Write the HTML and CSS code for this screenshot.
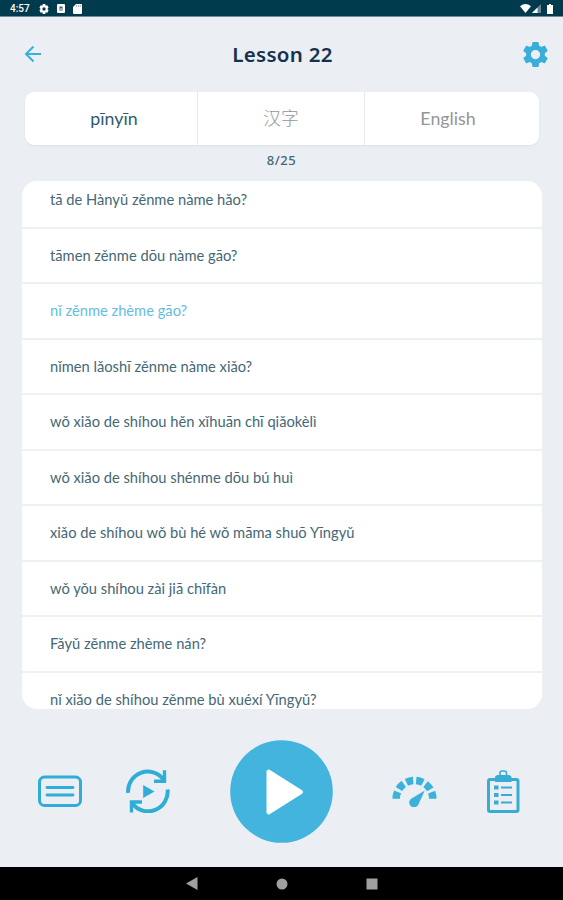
FILE: index.html
```html
<!DOCTYPE html>
<html lang="en">
<head>
<meta charset="UTF-8">
<meta name="viewport" content="width=device-width, initial-scale=1.0">
<title>Lesson 22</title>
<link rel="stylesheet" href="styles.css">
</head>

<body>
<div class="status-bar">
    <span class="clock">4:57</span>
    <svg class="st-gear" width="10" height="10" viewBox="0 0 24 24"><path fill="#fff" fill-rule="evenodd" d="M9 0h6l1 4 4-1 3 6-3 3 3 3-3 6-4-1-1 4H9l-1-4-4 1-3-6 3-3-3-3 3-6 4 1zM12 8a4 4 0 1 0 0 8 4 4 0 0 0 0-8z"/></svg>
    <svg class="st-app" width="8" height="9" viewBox="0 0 8 9"><rect width="8" height="9" rx="1" fill="#fff"/><rect x="2.5" y="2.5" width="3" height="4" fill="#3d5d6b"/><path d="M3 5h2" stroke="#fff"/></svg>
    <svg class="st-card" width="9" height="10" viewBox="0 0 9 10"><path fill="#fff" d="M3 0h5q1 0 1 1v8q0 1-1 1H1q-1 0-1-1V3z"/><path stroke="#8fa3b0" stroke-width=".8" d="M3.500 1v2M5.500 1v2M7.300 1v2"/></svg>
    <div class="status-right">
        <svg width="11" height="9" viewBox="0 0 11 9"><path fill="#fff" d="M0 2.200Q5.500-2 11 2.200L5.500 9z"/></svg>
        <svg width="9" height="9" viewBox="0 0 9 9"><path fill="#6c8592" d="M9 0v9H0z"/><path fill="#fff" d="M5.500 3.500V9H0z"/></svg>
        <svg class="battery" width="6" height="10" viewBox="0 0 6 10"><path fill="#fff" d="M2 0h2v1h2v9H0V1h2z"/></svg>
    </div>
</div>

<div class="header">
    <svg class="back" width="18" height="18" viewBox="0 0 18 18"><path fill="none" stroke="#36b1d8" stroke-width="2" d="M17 9H2M9.500 1.500L2 9l7.500 7.500"/></svg>
    <h1 class="title">Lesson 22</h1>
    <svg class="settings" width="25" height="25" viewBox="2 2 20 20"><path fill="#3aaedb" d="M19.430 12.980c.040-.320.070-.640.070-.980s-.030-.660-.070-.980l2.110-1.650c.190-.150.240-.420.120-.640l-2-3.460c-.120-.220-.390-.300-.610-.220l-2.490 1c-.520-.400-1.080-.730-1.690-.980l-.380-2.650C14.460 2.180 14.250 2 14 2h-4c-.250 0-.460.180-.490.420l-.380 2.650c-.610.250-1.170.590-1.690.980l-2.490-1c-.230-.090-.490 0-.610.220l-2 3.460c-.130.220-.070.490.120.640l2.110 1.650c-.040.320-.070.650-.070.980s.030.660.070.980l-2.110 1.650c-.190.150-.240.420-.120.640l2 3.460c.120.220.390.300.610.220l2.490-1c.520.400 1.080.730 1.690.980l.380 2.650c.030.240.240.420.490.420h4c.250 0 .460-.180.490-.420l.380-2.650c.610-.250 1.170-.590 1.690-.980l2.490 1c.230.090.490 0 .610-.220l2-3.460c.120-.220.070-.490-.120-.640l-2.110-1.650zM12 15.700c-2 0-3.700-1.700-3.700-3.700s1.700-3.700 3.700-3.700 3.700 1.700 3.700 3.700-1.700 3.700-3.700 3.700z"/></svg>
</div>

<div class="tabs">
    <div class="tab active">pīnyīn</div>
    <div class="tab hanzi">汉字</div>
    <div class="tab english">English</div>
</div>

<p class="counter">8/25</p>

<div class="list">
    <div class="row first">tā de Hànyǔ zěnme nàme hǎo?</div>
    <div class="row">tāmen zěnme dōu nàme gāo?</div>
    <div class="row current">nǐ zěnme zhème gāo?</div>
    <div class="row">nǐmen lǎoshī zěnme nàme xiǎo?</div>
    <div class="row">wǒ xiǎo de shíhou hěn xǐhuān chī qiǎokèlì</div>
    <div class="row">wǒ xiǎo de shíhou shénme dōu bú huì</div>
    <div class="row">xiǎo de shíhou wǒ bù hé wǒ māma shuō Yīngyǔ</div>
    <div class="row">wǒ yǒu shíhou zài jiā chīfàn</div>
    <div class="row">Fǎyǔ zěnme zhème nán?</div>
    <div class="row">nǐ xiǎo de shíhou zěnme bù xuéxí Yīngyǔ?</div>
</div>

<div class="controls">
    <div class="group-left">
        <svg width="44" height="32" viewBox="0 0 44 32"><rect x="1.500" y="2" width="41" height="28.500" rx="5" fill="none" stroke="#30add6" stroke-width="3"/><path stroke="#30add6" stroke-width="2.800" stroke-linecap="round" d="M9 12.500h26M9 20h26"/></svg>
        <svg width="44" height="44" viewBox="0 0 44 44">
            <path fill="none" stroke="#30add6" stroke-width="4" d="M2.100 23.800A19.700 19.700 0 0 1 37.500 10.500M41.600 20.500A19.700 19.700 0 0 1 6.300 34.500"/>
            <path fill="none" stroke="#30add6" stroke-width="3.400" d="M38.500 1.300v10.900H28M5.500 43.500V33H16"/>
            <path fill="#30add6" d="M17.200 16v13L28.500 22.500z"/>
        </svg>
    </div>
    <svg width="103" height="103" viewBox="0 0 103 103"><circle cx="51.500" cy="51.500" r="51.300" fill="#42b4dd"/><path fill="#fff" stroke="#fff" stroke-width="4" stroke-linejoin="round" d="M38.500 31.500v41L71 52z"/></svg>
    <div class="group-right">
        <svg width="45" height="32" viewBox="0 0 45 32">
            <path fill="none" stroke="#3cb1da" stroke-width="7.500" stroke-dasharray="7 3.100" d="M4.200 23.700A18.300 18.300 0 0 1 40.800 23.700"/>
            <path fill="#3cb1da" d="M32.800 15.500L18.800 24A4.800 4.800 0 1 0 26.500 29.300z"/>
        </svg>
        <svg width="33" height="44" viewBox="0 0 33 44">
            <rect x="1.500" y="10.500" width="29.500" height="32" rx="1.500" fill="none" stroke="#38acd4" stroke-width="3"/>
            <path fill="#38acd4" d="M8 13V8.500q0-2 3-2.500h10.500q3 .500 3 2.500V13z"/>
            <path fill="none" stroke="#38acd4" stroke-width="1.600" d="M13 7.500V4q0-2 2-2h2.500q2 0 2 2v3.500"/>
            <path stroke="#38acd4" stroke-width="2.200" d="M14 18.500h11M14 26h11M14 33.500h11"/>
            <path stroke="#38acd4" stroke-width="4.200" d="M7 18.500h4.500M7 26h4.500M7 33.500h4.500"/>
        </svg>
    </div>
</div>

<div class="nav-bar">
    <svg width="12" height="13" viewBox="0 0 12 13"><path fill="#a0a0a0" d="M11.500 0v13L0 6.500z"/></svg>
    <svg width="12" height="12" viewBox="0 0 12 12"><circle cx="6" cy="6" r="5.500" fill="#a0a0a0"/></svg>
    <svg width="12" height="12" viewBox="0 0 12 12"><rect x=".500" y=".500" width="11" height="11" fill="#a0a0a0"/></svg>
</div>
</body>
</html>
```
FILE: styles.css
```css
* {
    box-sizing: border-box;
}
body {
    margin: 0;
    width: 563px;
    height: 900px;
    overflow: hidden;
    display: flex;
    flex-direction: column;
    background-color: #ebeff3;
    font-family: Lato, "Noto Sans CJK SC", sans-serif;
    color: #446875;
}
svg {
    display: block;
    flex: none;
}
.status-bar {
    height: 17px;
    flex: none;
    display: flex;
    align-items: center;
    padding: 1px 10px 0;
    background-color: #003a4d;
    border-bottom: 1px solid #738a98;
}
.clock {
    width: 29px;
    font-family: Roboto, sans-serif;
    font-size: 10px;
    font-weight: 500;
    color: #ffffff;
}
.st-app {
    margin-left: 8px;
}
.st-card {
    margin-left: 8px;
}
.status-right {
    display: flex;
    align-items: center;
    gap: 1px;
    margin-left: auto;
}
.battery {
    margin-left: 5px;
}
.header {
    height: 75px;
    flex: none;
    display: flex;
    align-items: center;
    justify-content: space-between;
    padding: 0 15px 1px 24px;
}
.title {
    margin: 0;
    font-family: "Noto Sans", sans-serif;
    font-size: 20.5px;
    font-weight: 600;
    letter-spacing: 0.3px;
    color: #16314f;
}
.tabs {
    height: 53px;
    flex: none;
    display: flex;
    margin: 0 24px 0 25px;
    background-color: #ffffff;
    border-radius: 9px;
    box-shadow: 0 1px 2px #dbe1e5;
}
.tab {
    flex: 1;
    display: flex;
    align-items: center;
    justify-content: center;
    padding-bottom: 1px;
    font-size: 17.8px;
    color: #929599;
}
.tab + .tab {
    border-left: 1px solid #e6eaee;
}
.active {
    padding-left: 6px;
    color: #315b6b;
}
.tab.hanzi {
    flex: 0 0 167px;
    padding-bottom: 3px;
    font-weight: 300;
}
.english {
    padding-right: 8px;
}
.counter {
    margin: 0;
    height: 36px;
    flex: none;
    line-height: 31px;
    text-align: center;
    font-family: "Noto Sans", sans-serif;
    font-size: 13px;
    font-weight: 500;
    letter-spacing: 0.5px;
}
.list {
    height: 528px;
    flex: none;
    margin: 0 21px 0 22px;
    overflow: hidden;
    background-color: #ffffff;
    border-radius: 15px;
}
.row {
    height: 55.55px;
    padding-left: 28px;
    line-height: 53px;
    font-size: 14.7px;
    white-space: nowrap;
    border-bottom: 2px solid #eef1f4;
}
.first {
    margin-top: -8px;
}
.current {
    color: #65bde0;
}
.controls {
    height: 158px;
    flex: none;
    display: flex;
    align-items: center;
    justify-content: space-between;
    padding: 6px 43px 0 38px;
}
.group-left {
    display: flex;
    align-items: center;
    gap: 44px;
}
.group-right {
    display: flex;
    align-items: center;
    gap: 50px;
}
.nav-bar {
    height: 33px;
    flex: none;
    display: flex;
    align-items: center;
    justify-content: center;
    gap: 78px;
    background-color: #000000;
}
```
